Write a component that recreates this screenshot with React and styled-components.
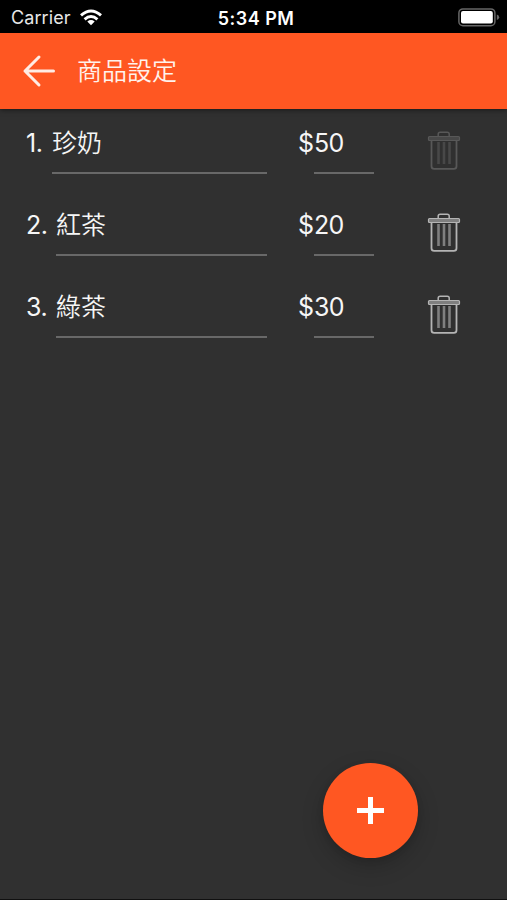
import React from 'react'
import styled, { createGlobalStyle } from 'styled-components'

const products = [
  { id: 1, name: '珍奶', price: 50, locked: true },
  { id: 2, name: '紅茶', price: 20 },
  { id: 3, name: '綠茶', price: 30 },
];

function TrashIcon() {
  return (
    <svg width="34" height="42" viewBox="0 0 34 42" fill="none" stroke="currentColor">
      <path d="M11.200 6V4Q11.200 2.200 13.200 2.200H20.200Q22.200 2.200 22.200 4V6" strokeWidth="1.5"/>
      <rect x="1.500" y="6.500" width="31" height="4" rx="1" fill="currentColor" fillOpacity="0.6" strokeWidth="1.2"/>
      <path d="M4.500 11V36.200Q4.500 38.800 7.200 38.800H26.800Q29.500 38.800 29.500 36.200V11" strokeWidth="1.8"/>
      <path d="M11.500 12V34M17 12V34M22.500 12V34" strokeWidth="2.6" strokeOpacity="0.6"/>
    </svg>
  )
}

function App() {
  return (
    <Screen>
      <GlobalStyle/>
      <StatusBar>
        <Carrier>
          <span>Carrier</span>
          <svg width="24" height="17" viewBox="0 0 24 17" fill="none" stroke="#fff" strokeWidth="3">
            <path d="M2 6.400Q12 -2.400 22 6.400"/>
            <path d="M5.600 10.300Q12 4.700 18.400 10.300"/>
            <path d="M12 16.200L8.300 12.500Q12 9.700 15.700 12.500Z" fill="#fff" stroke="none"/>
          </svg>
        </Carrier>
        <Clock>5:34 PM</Clock>
        <Battery>
          <svg width="42" height="19" viewBox="0 0 42 19">
            <rect x="0.900" y="0.900" width="36" height="16.800" rx="4" fill="none" stroke="#666" strokeWidth="1.500"/>
            <rect x="3" y="3" width="31.800" height="12.600" rx="2" fill="#fff"/>
            <path d="M38.800 6.500Q41.200 7.300 41.200 9.300T38.800 12.100Z" fill="#666"/>
          </svg>
        </Battery>
      </StatusBar>
      <Header>
        <BackButton aria-label="返回">
          <svg width="34" height="34" viewBox="0 0 34 34" fill="none" stroke="#ffece4" strokeWidth="3" strokeLinecap="round" strokeLinejoin="round">
            <path d="M31.500 17H3M17 3L3 17L17 31"/>
          </svg>
        </BackButton>
        <Title>商品設定</Title>
      </Header>
      <List>
        {products.map((item,index)=>(
          <Row key={item.id}>
            <NameCell>
              <Label $narrow={index===0}>{index+1}.</Label>
              <Field>{item.name}</Field>
            </NameCell>
            <PriceCell>
              <Label>$</Label>
              <Field><Amount>{item.price}</Amount></Field>
            </PriceCell>
            <DeleteButton disabled={item.locked} aria-label="刪除">
              <TrashIcon/>
            </DeleteButton>
          </Row>
        ))}
      </List>
      <Footer>
        <AddButton aria-label="新增">
          <span/>
          <span/>
        </AddButton>
      </Footer>
    </Screen>
  )
}

const GlobalStyle=createGlobalStyle`
*{
    box-sizing: border-box;
}

body{
    margin: 0;
    background: #303030;
}

button{
    padding: 0;
    border: none;
    background: none;
    cursor: pointer;
}
`;

const Screen=styled.div`
display: flex;
flex-direction: column;
width: 100%;
height: 100vh;
overflow: hidden;
color: #f6f6f6;
background: #303030;
border-bottom: 1px solid #101010;
font-family: Inter, "Noto Sans CJK TC", sans-serif;
`;

const StatusBar=styled.div`
display: grid;
grid-template-columns: 1fr auto 1fr;
align-items: center;
flex: none;
height: 33px;
padding: 2px 7px 0 11px;
color: #fff;
background: #000;
font-size: 18px;
`;

const Carrier=styled.div`
display: flex;
align-items: center;
gap: 8px;
color: #e8e8e8;
letter-spacing: 0.1px;
`;

const Clock=styled.div`
padding: 1px 0 0 1px;
font-weight: 600;
letter-spacing: 0.5px;
`;

const Battery=styled.div`
display: flex;
justify-content: flex-end;
`;

const Header=styled.div`
display: flex;
align-items: center;
flex: none;
height: 76px;
padding-left: 22px;
background: #ff5722;
box-shadow: 0 1px 5px rgba(0,0,0,0.5);
z-index: 1;
`;

const BackButton=styled.button`
display: flex;
width: 34px;
margin-right: 21px;
`;

const Title=styled.div`
padding-bottom: 4px;
color: #fff2ec;
font-family: "Noto Sans CJK TC", sans-serif;
font-size: 25px;
font-weight: 350;
line-height: 36px;
`;

const List=styled.div`
flex: 1;
padding: 16px 0 0 26px;
`;

const Row=styled.div`
display: flex;
align-items: flex-start;
height: 82px;
font-size: 25px;
font-weight: 350;
line-height: 36px;
`;

const NameCell=styled.div`
display: flex;
width: 241px;
margin-right: 31px;
`;

const PriceCell=styled.div`
display: flex;
width: 76px;
margin-right: 53px;

& > :first-child{
    width: 16px;
}
`;

const Label=styled.div`
flex: none;
width: ${props=>props.$narrow ? '26px' : '30px'};
height: 36px;
font-weight: 400;
letter-spacing: -0.4px;
`;

const Field=styled.div`
flex: 1;
height: 49px;
border-bottom: 2px solid #686868;
`;

const Amount=styled.span`
font-weight: 400;
letter-spacing: -0.8px;
`;

const DeleteButton=styled.button`
display: flex;
margin-top: 5px;
color: #b4b4b4;

&:disabled{
    color: #585858;
    cursor: default;
}
`;

const Footer=styled.div`
display: flex;
justify-content: flex-end;
flex: none;
padding: 0 89px 41px 0;
`;

const AddButton=styled.button`
display: grid;
place-items: center;
width: 95px;
height: 95px;
border-radius: 50%;
background: #ff5722;
box-shadow: 0 8px 22px rgba(0,0,0,0.2), 0 2px 6px rgba(0,0,0,0.1);

span{
    grid-area: 1 / 1;
    width: 27px;
    height: 5px;
    background: #fff;
}

span:last-child{
    width: 5px;
    height: 27px;
}
`;

export default App
